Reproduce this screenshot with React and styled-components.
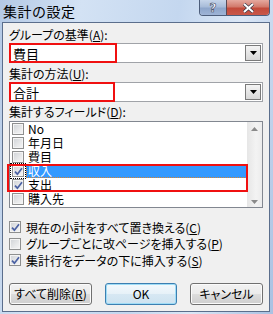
import React from 'react'
import styled, { createGlobalStyle } from 'styled-components'

const GlobalStyle = createGlobalStyle`
  html, body { margin: 0; padding: 0; background: #ffffff; }
  body {
    font-family: "Noto Sans CJK JP", "Noto Sans", sans-serif;
    font-size: 12px;
    color: #000;
  }
`

const Frame = styled.div`
  width: 273px;
  height: 314px;
  box-sizing: border-box;
  display: flex;
  flex-direction: column;
  padding: 0 3px 2px 2px;
  background: linear-gradient(100deg, #b4c9e5 0%, #d3e2f4 25%, #c4d7ef 55%, #dbe7f6 75%, #a9c1e2 100%);
`

const TitleBar = styled.div`
  height: 22px;
  display: flex;
  align-items: flex-start;
`

const Title = styled.div`
  padding: 3px 0 0 1px;
  font-size: 14px;
  line-height: 16px;
  letter-spacing: 0.5px;
`

const Caption = styled.div`
  margin-left: auto;
  display: flex;
  height: 15px;
  border: 1px solid #4d5e7b;
  border-top: none;
  border-radius: 0 0 4px 4px;
  overflow: hidden;
`

const CaptionButton = styled.div`
  width: ${p => p.w}px;
  height: 100%;
  display: flex;
  align-items: center;
  justify-content: center;
  background: ${p => p.close
    ? 'linear-gradient(#e5a99f 0%, #d27a6c 45%, #c24a3a 55%, #c9584a 100%)'
    : 'linear-gradient(#c6d5ea 0%, #a8bcd9 45%, #8ea6cb 55%, #9fb4d6 100%)'};
  border-left: ${p => p.close ? '1px solid #5a4a55' : 'none'};
  color: #fff;
  font-family: "DejaVu Sans", sans-serif;
  font-weight: bold;
  font-size: 12px;
  -webkit-text-stroke: 0.6px #3a4660;
`

const Client = styled.div`
  flex: 1;
  box-sizing: border-box;
  border: 1px solid #5b6e8c;
  background: #f0f0f0;
  padding: 5px 6px 0 6px;
  display: flex;
  flex-direction: column;
`

const Label = styled.div`
  height: 14px;
  line-height: 14px;
  white-space: nowrap;
  font-feature-settings: "palt";
  margin-top: ${p => p.mt || 0}px;
`

const Combo = styled.div`
  position: relative;
  margin-top: ${p => p.mt || 0}px;
  height: 20px;
  box-sizing: border-box;
  border: 1px solid #a0a3a8;
  background: #fff;
  display: flex;
  align-items: center;
`

const ComboText = styled.span`
  padding-left: 3px;
  font-size: 13px;
`

const DropButton = styled.div`
  margin-left: auto;
  margin-right: 1px;
  width: 16px;
  height: 16px;
  box-sizing: border-box;
  border: 1px solid #7a7a7a;
  background: linear-gradient(#f4f4f4, #d8d8d8);
  display: flex;
  align-items: center;
  justify-content: center;
`

const Mark = styled.div`
  position: absolute;
  left: ${p => p.l}px;
  top: ${p => p.t}px;
  width: ${p => p.w}px;
  height: ${p => p.h}px;
  box-sizing: border-box;
  border: 2px solid #f01010;
  pointer-events: none;
`

const List = styled.div`
  position: relative;
  margin-top: 2px;
  height: 87px;
  box-sizing: border-box;
  border: 1px solid #828790;
  background: #fff;
  display: flex;
`

const Items = styled.div`
  flex: 1;
  display: flex;
  flex-direction: column;
`

const Row = styled.div`
  height: 14px;
  display: flex;
  align-items: center;
  padding-left: 2px;
`

const RowText = styled.span`
  flex: 1;
  margin-left: 2px;
  height: 14px;
  line-height: 14px;
  padding-left: 2px;
  font-size: 12px;
  box-sizing: border-box;
  background: ${p => p.selected ? '#3399ff' : 'transparent'};
  color: ${p => p.selected ? '#fff' : '#000'};
  outline: ${p => p.selected ? '1px dotted #d9822b' : 'none'};
  outline-offset: -1px;
`

const Scroll = styled.div`
  width: 15px;
  background: linear-gradient(90deg, #e6e6e6, #f3f3f3 60%, #ececec);
  display: flex;
  flex-direction: column;
  align-items: center;
  justify-content: space-between;
  padding: 5px 0 3px;
  box-sizing: border-box;
`

const Box = styled.span`
  width: 12px;
  height: 12px;
  flex: none;
  box-sizing: border-box;
  border: 1px solid #8e8f8f;
  background: linear-gradient(135deg, #cfd2d6 0%, #e8e9ea 60%, #f6f6f6 100%);
  box-shadow: inset 0 0 0 1px #f4f4f4;
  display: flex;
  align-items: center;
  justify-content: center;
  outline: ${p => p.focus ? '1px dotted #000' : 'none'};
  outline-offset: 1px;
`

const Options = styled.div`
  margin-top: 11px;
  display: flex;
  flex-direction: column;
`

const Option = styled.div`
  height: 16.5px;
  display: flex;
  align-items: center;
  gap: 5px;
  white-space: nowrap;
`

const OptionText = styled.span`
  font-feature-settings: "palt";
`

const Buttons = styled.div`
  margin-top: 14px;
  display: flex;
  justify-content: space-between;
`

const Button = styled.div`
  width: ${p => p.w}px;
  height: 22px;
  box-sizing: border-box;
  border: 1px solid ${p => p.primary ? '#3c7fb1' : '#707070'};
  border-radius: 3px;
  background: ${p => p.primary
    ? 'linear-gradient(#f4f9fc 0%, #e6f1f8 50%, #d7e8f3 50%, #cde2f0 100%)'
    : 'linear-gradient(#f2f2f2 0%, #ebebeb 50%, #dddddd 50%, #cfcfcf 100%)'};
  box-shadow: inset 0 0 0 1px ${p => p.primary ? '#9fdcf6' : '#fbfbfb'};
  text-align: center;
  line-height: 20px;
  white-space: nowrap;
  font-feature-settings: "palt";
`

const Check = () => (
  <svg width="9" height="9" viewBox="0 0 9 9">
    <path d="M1 4.6 L3.4 7.2 L8 1.2" fill="none" stroke="#4b61a3" strokeWidth="1.7" />
  </svg>
)

const CheckBox = ({ checked, focus }) => (
  <Box focus={focus}>{checked && <Check />}</Box>
)

const Down = ({ color = '#000' }) => (
  <svg width="7" height="4" viewBox="0 0 7 4">
    <path d="M0 0 H7 L3.5 4 Z" fill={color} />
  </svg>
)

const Up = ({ color }) => (
  <svg width="7" height="4" viewBox="0 0 7 4">
    <path d="M0 4 H7 L3.5 0 Z" fill={color} />
  </svg>
)

const fields = [
  { name: 'No' },
  { name: '年月日' },
  { name: '費目' },
  { name: '収入', checked: true, selected: true },
  { name: '支出', checked: true },
  { name: '購入先' },
]

export default function App() {
  return (
    <>
      <GlobalStyle />
      <Frame>
        <TitleBar>
          <Title>集計の設定</Title>
          <Caption>
            <CaptionButton w={26}>?</CaptionButton>
            <CaptionButton w={42} close>
              <svg width="13" height="10" viewBox="0 0 13 10">
                <path d="M2 1 L11 9 M11 1 L2 9" stroke="#3a3a4a" strokeWidth="3.4" />
                <path d="M2 1 L11 9 M11 1 L2 9" stroke="#fff" strokeWidth="2" />
              </svg>
            </CaptionButton>
          </Caption>
        </TitleBar>
        <Client>
          <Label>グループの基準(<u>A</u>):</Label>
          <Combo mt={1}>
            <ComboText>費目</ComboText>
            <DropButton><Down /></DropButton>
            <Mark l={-1} t={-1} w={108} h={20} />
          </Combo>
          <Label mt={4}>集計の方法(<u>U</u>):</Label>
          <Combo mt={1}>
            <ComboText>合計</ComboText>
            <DropButton><Down /></DropButton>
            <Mark l={-1} t={-1} w={106} h={20} />
          </Combo>
          <Label mt={3}>集計するフィールド(<u>D</u>):</Label>
          <List>
            <Items>
              {fields.map(f => (
                <Row key={f.name}>
                  <CheckBox checked={f.checked} focus={f.selected} />
                  <RowText selected={f.selected}>{f.name}</RowText>
                </Row>
              ))}
            </Items>
            <Scroll>
              <Up color="#8a8a8a" />
              <Down color="#8a8a8a" />
            </Scroll>
            <Mark l={-3} t={42} w={241} h={28} />
          </List>
          <Options>
            <Option><CheckBox checked /><OptionText>現在の小計をすべて置き換える(<u>C</u>)</OptionText></Option>
            <Option><CheckBox /><OptionText>グループごとに改ページを挿入する(<u>P</u>)</OptionText></Option>
            <Option><CheckBox checked /><OptionText>集計行をデータの下に挿入する(<u>S</u>)</OptionText></Option>
          </Options>
          <Buttons>
            <Button w={83}>すべて削除(<u>R</u>)</Button>
            <Button w={72} primary>OK</Button>
            <Button w={73}>キャンセル</Button>
          </Buttons>
        </Client>
      </Frame>
    </>
  )
}
